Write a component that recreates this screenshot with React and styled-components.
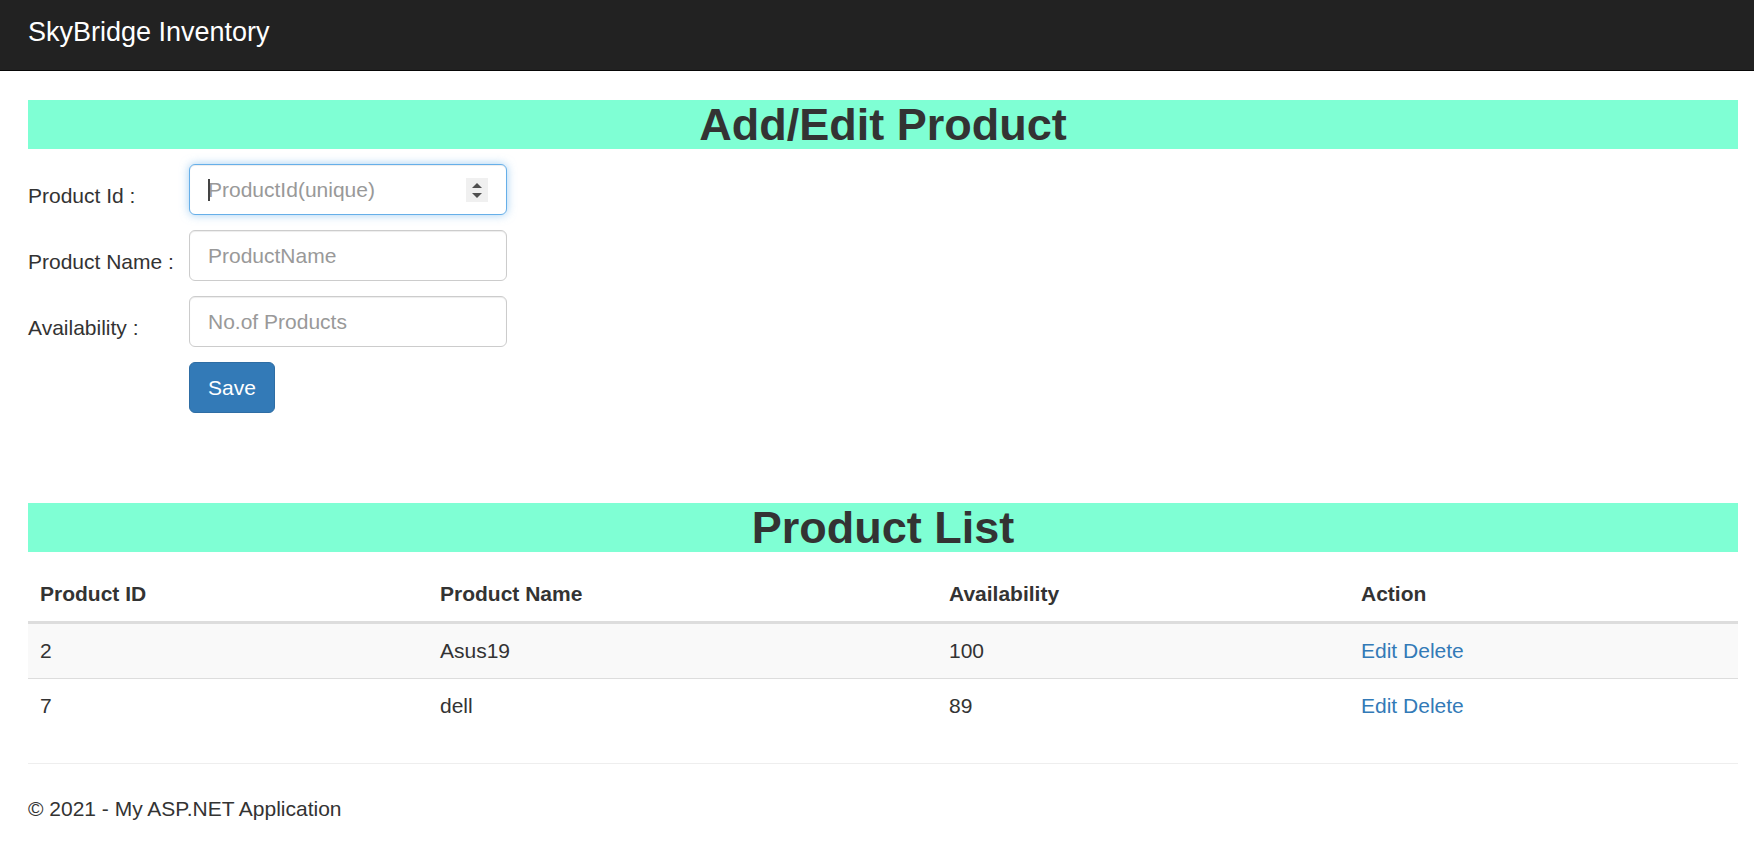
import React from 'react';
import styled, { createGlobalStyle } from 'styled-components';

const GlobalStyle = createGlobalStyle`
  html, body {
    margin: 0;
    padding: 0;
    background: #fff;
  }
  body {
    font-family: "Liberation Sans", Arial, Helvetica, sans-serif;
    font-size: 21px;
    line-height: 30px;
    color: #333;
  }
  * {
    box-sizing: border-box;
  }
`;

const Navbar = styled.div`
  height: 71px;
  padding: 17px 28px 0;
  background-color: #222;
  border-bottom: 1px solid #080808;
`;

const Brand = styled.a`
  font-size: 27px;
  line-height: 31px;
  color: #fff;
  text-decoration: none;
`;

const Content = styled.div`
  padding: 29px 16px 0 28px;
`;

const SectionTitle = styled.h1`
  margin: ${p => (p.$spaced ? '90px 0 15px' : '0 0 15px')};
  background-color: #7fffd4;
  font-size: 45px;
  line-height: 49px;
  font-weight: 700;
  text-align: center;
  color: #333;
`;

const Form = styled.form`
  display: grid;
  grid-template-columns: 161px 318px;
  row-gap: 15px;
`;

const FieldLabel = styled.label`
  padding-top: 17px;
  line-height: 30px;
  white-space: nowrap;
`;

const Field = styled.div`
  position: relative;
  height: 51px;
`;

const Input = styled.input`
  display: block;
  width: 100%;
  height: 51px;
  padding: 9px 18px;
  font-family: inherit;
  font-size: 21px;
  color: #555;
  background: #fff;
  border: 1px solid ${p => (p.$focused ? '#66afe9' : '#ccc')};
  border-radius: 6px;
  outline: none;
  box-shadow: ${p =>
    p.$focused
      ? 'inset 0 1px 1px rgba(0,0,0,.075), 0 0 10px rgba(102,175,233,.6)'
      : 'inset 0 1px 1px rgba(0,0,0,.075)'};

  &::placeholder {
    color: #999;
  }
`;

const Caret = styled.span`
  position: absolute;
  left: 19px;
  top: 15px;
  width: 2px;
  height: 22px;
  background-color: #444;
`;

const Spinner = styled.span`
  position: absolute;
  right: 19px;
  top: 14px;
  width: 22px;
  height: 24px;
  background-color: #f0f0f0;
  display: flex;
  flex-direction: column;
  align-items: center;
  justify-content: center;
  gap: 5px;
`;

const Arrow = styled.span`
  width: 0;
  height: 0;
  border-left: 5.5px solid transparent;
  border-right: 5.5px solid transparent;
  ${p => (p.$down ? 'border-top: 5px solid #505050;' : 'border-bottom: 5px solid #505050;')}
`;

const SaveButton = styled.button`
  grid-column: 2;
  justify-self: start;
  height: 51px;
  padding: 0 18px;
  font-family: inherit;
  font-size: 21px;
  color: #fff;
  background-color: #337ab7;
  border: 1px solid #2e6da4;
  border-radius: 6px;
  cursor: pointer;
`;

const Table = styled.table`
  width: 100%;
  border-collapse: collapse;
  border-spacing: 0;
  margin-bottom: 30px;

  th {
    text-align: left;
    font-weight: 700;
    padding: 12px;
    line-height: 30px;
    border-bottom: 3px solid #ddd;
  }

  td {
    padding: 12px;
    line-height: 30px;
    border-top: 1px solid #ddd;
  }

  tbody tr:nth-child(odd) {
    background-color: #f9f9f9;
  }
`;

const ActionLink = styled.a`
  color: #337ab7;
  text-decoration: none;
`;

const Divider = styled.hr`
  margin: 0 0 30px;
  border: 0;
  border-top: 1px solid #eee;
`;

const FooterText = styled.p`
  margin: 0;
`;

const products = [
  { id: 2, name: 'Asus19', count: 100 },
  { id: 7, name: 'dell', count: 89 },
];

export default function App() {
  return (
    <>
      <GlobalStyle />
      <Navbar>
        <Brand href="#">SkyBridge Inventory</Brand>
      </Navbar>
      <Content>
        <SectionTitle>Add/Edit Product</SectionTitle>
        <Form onSubmit={e => e.preventDefault()}>
          <FieldLabel>Product Id :</FieldLabel>
          <Field>
            <Input $focused type="text" placeholder="ProductId(unique)" />
            <Caret />
            <Spinner>
              <Arrow />
              <Arrow $down />
            </Spinner>
          </Field>
          <FieldLabel>Product Name :</FieldLabel>
          <Field>
            <Input type="text" placeholder="ProductName" />
          </Field>
          <FieldLabel>Availability :</FieldLabel>
          <Field>
            <Input type="text" placeholder="No.of Products" />
          </Field>
          <SaveButton type="submit">Save</SaveButton>
        </Form>

        <SectionTitle $spaced>Product List</SectionTitle>
        <Table>
          <thead>
            <tr>
              <th style={{ width: 400 }}>Product ID</th>
              <th style={{ width: 509 }}>Product Name</th>
              <th style={{ width: 412 }}>Availability</th>
              <th>Action</th>
            </tr>
          </thead>
          <tbody>
            {products.map(p => (
              <tr key={p.id}>
                <td>{p.id}</td>
                <td>{p.name}</td>
                <td>{p.count}</td>
                <td>
                  <ActionLink href="#">Edit</ActionLink> <ActionLink href="#">Delete</ActionLink>
                </td>
              </tr>
            ))}
          </tbody>
        </Table>

        <Divider />
        <FooterText>© 2021 - My ASP.NET Application</FooterText>
      </Content>
    </>
  );
}
